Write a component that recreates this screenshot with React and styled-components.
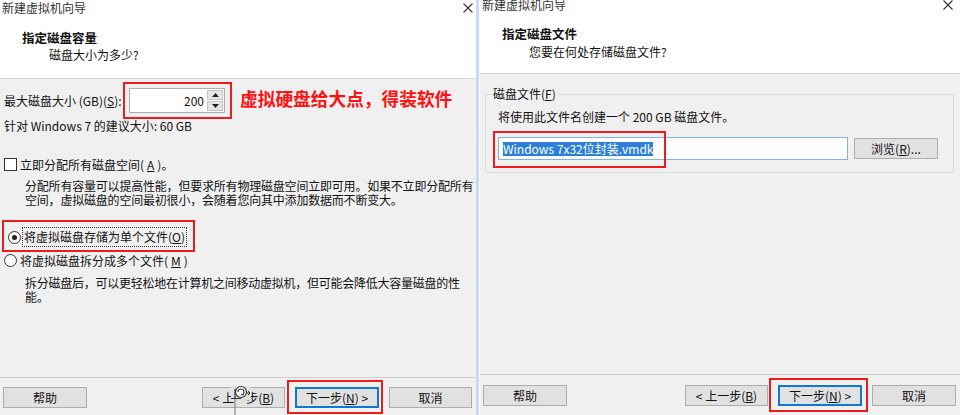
import styled, { createGlobalStyle } from "styled-components";

const GlobalStyle = createGlobalStyle`
    body {
        margin: 0;
        background: #ffffff;
        font-family: "Noto Sans CJK SC", "Noto Sans", sans-serif;
        color: #111;
    }
`

const Screen = styled.div`
    display: flex;
    width: 960px;
    height: 415px;
    overflow: hidden;
    background: #fff;
`

const Dialog = styled.section`
    width: ${({ $w }) => $w}px;
    height: 415px;
    flex-shrink: 0;
    display: flex;
    flex-direction: column;
    background: #f0f0f0;
    font-size: 12px;
`

const WindowEdge = styled.div`
    width: 3px;
    margin-right: 1px;
    background: #c3dcf5;
    flex-shrink: 0;
`

const Header = styled.header`
    height: ${({ $h }) => $h}px;
    flex-shrink: 0;
    background: #fff;
    border-bottom: 1px solid #d6d6d6;
    overflow: hidden;
`

const TitleBar = styled.div`
    display: flex;
    justify-content: space-between;
    align-items: center;
    height: 16px;
    line-height: 16px;
    margin-top: ${({ $shift }) => $shift}px;
    padding: 0 ${({ $right }) => $right}px 0 2px;
    color: #333;
`

const Heading = styled.h1`
    margin: ${({ $top }) => $top}px 0 0 22px;
    font-size: 12.5px;
    font-weight: bold;
    line-height: 16px;
`

const SubHeading = styled.p`
    margin: ${({ $top }) => $top}px 0 0 49px;
    line-height: 16px;
`

const Body = styled.div`
    flex: 1;
    min-height: 0;
`

const SizeRow = styled.div`
    display: flex;
    align-items: center;
    margin-top: 3px;
    padding-left: 4px;
`

const SizeLabel = styled.span`
    width: 119px;
    white-space: nowrap;
    line-height: 16px;
`

const Mark = styled.div`
    border: 2px solid #ee1c1c;
    padding: ${({ $pad }) => $pad};
    display: flex;
    align-items: center;
`

const SpinBox = styled.div`
    display: flex;
    width: 94px;
    height: 23px;
    border: 1px solid #adadad;
    background: #fff;
`

const SpinValue = styled.div`
    flex: 1;
    text-align: right;
    line-height: 23px;
    padding-right: 3px;
`

const SpinArrows = styled.div`
    width: 16px;
    display: flex;
    flex-direction: column;
    gap: 1px;
    padding: 1px 1px 1px 0;
`

const SpinButton = styled.div`
    flex: 1;
    background: #e6e6e6;
    border: 1px solid #c4c4c4;
    display: flex;
    align-items: center;
    justify-content: center;
`

const Note = styled.span`
    margin: 0 0 6px 8px;
    color: #ff1111;
    font-size: 17.7px;
    font-weight: bold;
    line-height: 22px;
    white-space: nowrap;
`

const Line = styled.div`
    margin: ${({ $top }) => $top}px 0 0 ${({ $left }) => $left}px;
    line-height: ${({ $lh }) => $lh || 14}px;
    letter-spacing: ${({ $ls }) => $ls || 0}px;
    white-space: nowrap;
`

const Option = styled.label`
    display: flex;
    align-items: center;
    gap: 3px;
    height: 16px;
    padding-left: 4px;
    margin-top: ${({ $top }) => $top || 0}px;
    white-space: nowrap;
`

const CheckBox = styled.span`
    width: 11px;
    height: 11px;
    border: 1px solid #333;
    background: #fff;
`

const Radio = styled.span`
    width: 11px;
    height: 11px;
    border: 1px solid #333;
    border-radius: 50%;
    background: #fff;
    display: flex;
    align-items: center;
    justify-content: center;
    &::after {
        content: "";
        width: 5px;
        height: 5px;
        border-radius: 50%;
        background: ${({ $on }) => ($on ? "#222" : "transparent")};
    }
`

const Focused = styled.span`
    outline: 1px dotted #333;
    outline-offset: 1px;
    line-height: 16px;
`

const RadioMark = styled.div`
    width: 189px;
    height: 26px;
    margin: 13px 0 0 2px;
    border: 2px solid #ee1c1c;
    display: flex;
    align-items: center;
    padding-top: 2px;
    box-sizing: content-box;
`

const Footer = styled.footer`
    height: ${({ $h }) => $h}px;
    flex-shrink: 0;
    border-top: 1px solid #cfcfcf;
    display: flex;
    align-items: flex-start;
    padding: ${({ $top }) => $top}px 4px 0 3px;
    box-sizing: border-box;
`

const Button = styled.button`
    position: relative;
    flex-shrink: 0;
    width: ${({ $w }) => $w || 84}px;
    height: 21px;
    padding: 0;
    margin-left: ${({ $ml }) => $ml || 0}px;
    font-family: inherit;
    font-size: 12px;
    color: #111;
    background: #e1e1e1;
    border: 1px solid ${({ $primary }) => ($primary ? "#0f78d5" : "#adadad")};
    box-shadow: ${({ $primary }) => ($primary ? "inset 0 0 0 1px #0f78d5" : "none")};
    white-space: nowrap;
`

const Spacer = styled.div`
    flex: 1;
`

const ButtonMark = styled.div`
    border: 2px solid #ee1c1c;
    padding: ${({ $pad }) => $pad};
    margin: ${({ $m }) => $m};
`

const Cursor = styled.svg`
    position: absolute;
    left: 26px;
    top: -3px;
    overflow: visible;
`

const Group = styled.fieldset`
    margin: 13px 6px 0 5px;
    padding: 0 12px 12px 12px;
    border: 1px solid #dcdcdc;
    border-radius: 2px;
`

const Legend = styled.legend`
    margin-left: -7px;
    padding: 0 2px;
    line-height: 14px;
`

const FileRow = styled.div`
    display: flex;
    align-items: center;
    gap: 6px;
    margin-top: 13px;
`

const FileInput = styled.div`
    position: relative;
    width: 344px;
    height: 21px;
    border: 1px solid #7eb4ea;
    background: #fff;
    display: flex;
    align-items: center;
    padding-left: 4px;
    box-sizing: content-box;
`

const Selected = styled.span`
    background: #2b7fd8;
    color: #fff;
    line-height: 14px;
    white-space: nowrap;
`

const InputMark = styled.div`
    position: absolute;
    left: -6px;
    top: -7px;
    width: 169px;
    height: 33px;
    border: 2px solid #ee1c1c;
`

function CloseIcon() {
    return (
        <svg width="10" height="10" viewBox="0 0 10 10">
            <path d="M0.5 0.5 L9.5 9.5 M9.5 0.5 L0.5 9.5" stroke="#333" strokeWidth="1.1" />
        </svg>
    )
}

function Arrow({ up }) {
    return (
        <svg width="7" height="4" viewBox="0 0 7 4">
            <path d={up ? "M0 4 L3.5 0 L7 4 Z" : "M0 0 L7 0 L3.5 4 Z"} fill="#222" />
        </svg>
    )
}

function BusyCursor() {
    return (
        <Cursor width="22" height="34" viewBox="0 0 22 34">
            <rect x="2" y="1" width="20" height="14" fill="#e1e1e1" />
            <circle cx="12" cy="7" r="5.5" fill="#fff" stroke="#333" strokeWidth="1.2" />
            <path d="M9 7 A3 3 0 1 1 12 10" fill="none" stroke="#333" strokeWidth="1.1" />
            <path d="M17 8 L21 8 M19 6 L21 8 L19 10" fill="none" stroke="#333" strokeWidth="1" />
            <path d="M2 13.5 L12 13.5 M6 4 L6 13.5" stroke="#333" strokeWidth="1.2" />
            <path d="M6 14 L6 34" stroke="#777" strokeWidth="1" />
        </Cursor>
    )
}

function CapacityPage() {
    return (
        <Dialog $w={476}>
            <Header $h={78}>
                <TitleBar $shift={0} $right={3}>
                    <span>新建虚拟机向导</span>
                    <CloseIcon />
                </TitleBar>
                <Heading $top={14}>指定磁盘容量</Heading>
                <SubHeading $top={1}>磁盘大小为多少?</SubHeading>
            </Header>

            <Body>
                <SizeRow>
                    <SizeLabel>最大磁盘大小 (GB)(<u>S</u>):</SizeLabel>
                    <Mark $pad="4px 5px 4px 4px">
                        <SpinBox>
                            <SpinValue>200</SpinValue>
                            <SpinArrows>
                                <SpinButton><Arrow up /></SpinButton>
                                <SpinButton><Arrow /></SpinButton>
                            </SpinArrows>
                        </SpinBox>
                    </Mark>
                    <Note>虚拟硬盘给大点，得装软件</Note>
                </SizeRow>
                <Line $top={0} $left={4}>针对 Windows 7 的建议大小: 60 GB</Line>

                <Option $top={23}>
                    <CheckBox />
                    立即分配所有磁盘空间(<u>A</u>)。
                </Option>
                <Line $top={7} $left={25} $ls={-0.2}>分配所有容量可以提高性能，但要求所有物理磁盘空间立即可用。如果不立即分配所有</Line>
                <Line $top={0} $left={25} $ls={-0.2}>空间，虚拟磁盘的空间最初很小，会随着您向其中添加数据而不断变大。</Line>

                <RadioMark>
                    <Option>
                        <Radio $on />
                        <Focused>将虚拟磁盘存储为单个文件(<u>O</u>)</Focused>
                    </Option>
                </RadioMark>
                <Option $top={0}>
                    <Radio />
                    将虚拟磁盘拆分成多个文件(<u>M</u>)
                </Option>
                <Line $top={8} $left={25} $ls={-0.25}>拆分磁盘后，可以更轻松地在计算机之间移动虚拟机，但可能会降低大容量磁盘的性</Line>
                <Line $top={0} $left={25}>能。</Line>
            </Body>

            <Footer $h={38} $top={9}>
                <Button>帮助</Button>
                <Spacer />
                <Button $w={83}>
                    &lt; 上一步(<u>B</u>)
                    <BusyCursor />
                </Button>
                <ButtonMark $pad="5px 2px 4px 6px" $m="-7px 0 0 2px">
                    <Button $primary>下一步(<u>N</u>) &gt;</Button>
                </ButtonMark>
                <Button $ml={6} $w={83}>取消</Button>
            </Footer>
        </Dialog>
    )
}

function FilePage() {
    return (
        <Dialog $w={480}>
            <Header $h={73}>
                <TitleBar $shift={-3} $right={7}>
                    <span>新建虚拟机向导</span>
                    <CloseIcon />
                </TitleBar>
                <Heading $top={13}>指定磁盘文件</Heading>
                <SubHeading $top={2}>您要在何处存储磁盘文件?</SubHeading>
            </Header>

            <Body>
                <Group>
                    <Legend>磁盘文件(<u>F</u>)</Legend>
                    <Line $top={9} $left={0}>将使用此文件名创建一个 200 GB 磁盘文件。</Line>
                    <FileRow>
                        <FileInput>
                            <Selected>Windows 7x32位封装.vmdk</Selected>
                            <InputMark />
                        </FileInput>
                        <Button>浏览(<u>R</u>)...</Button>
                    </FileRow>
                </Group>
            </Body>

            <Footer $h={41} $top={10}>
                <Button>帮助</Button>
                <Spacer />
                <Button $w={83}>&lt; 上一步(<u>B</u>)</Button>
                <ButtonMark $pad="5px 4px 4px 7px" $m="-7px 0 0 1px">
                    <Button $primary>下一步(<u>N</u>) &gt;</Button>
                </ButtonMark>
                <Button $ml={4}>取消</Button>
            </Footer>
        </Dialog>
    )
}

export default function App() {
    return (
        <>
            <GlobalStyle />
            <Screen>
                <CapacityPage />
                <WindowEdge />
                <FilePage />
            </Screen>
        </>
    )
}
